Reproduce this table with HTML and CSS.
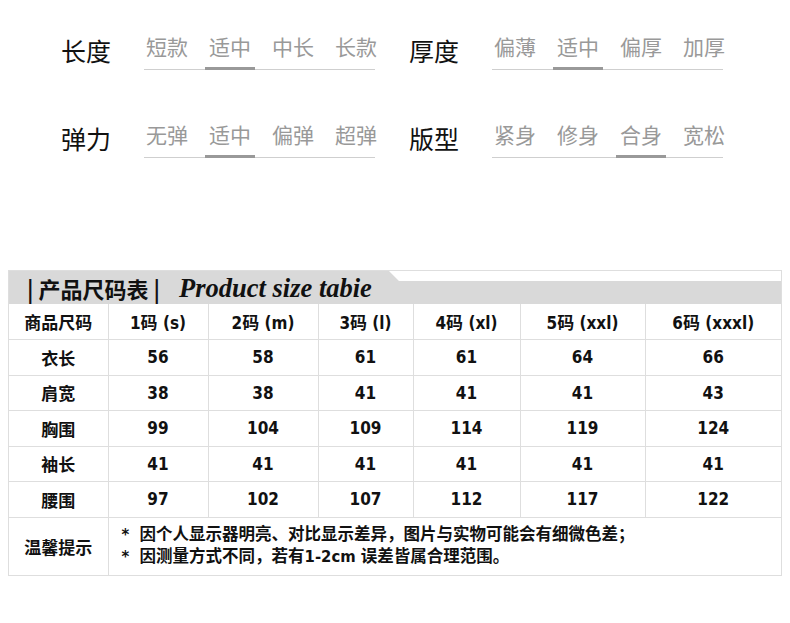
FILE: index.html
```html
<!DOCTYPE html>
<html lang="zh-CN">
<head>
<meta charset="utf-8">
<title>Product size</title>
<link rel="stylesheet" href="styles.css">
</head>
<body>
<div class="page">
  <section class="attrs">
    <div class="attr-row">
      <div class="attr">
        <span class="attr-label">长度</span>
        <div class="opts"><span class="opt">短款</span><span class="opt on">适中</span><span class="opt">中长</span><span class="opt">长款</span></div>
      </div>
      <div class="attr">
        <span class="attr-label">厚度</span>
        <div class="opts"><span class="opt">偏薄</span><span class="opt on">适中</span><span class="opt">偏厚</span><span class="opt">加厚</span></div>
      </div>
    </div>
    <div class="attr-row">
      <div class="attr">
        <span class="attr-label">弹力</span>
        <div class="opts"><span class="opt">无弹</span><span class="opt on">适中</span><span class="opt">偏弹</span><span class="opt">超弹</span></div>
      </div>
      <div class="attr">
        <span class="attr-label">版型</span>
        <div class="opts"><span class="opt">紧身</span><span class="opt">修身</span><span class="opt on">合身</span><span class="opt">宽松</span></div>
      </div>
    </div>
  </section>

  <section class="size-box">
    <div class="size-head">
      <span class="head-cn">| 产品尺码表 |</span>
      <span class="head-en">Product size tabie</span>
    </div>
    <table class="size-table">
      <colgroup>
        <col class="c1"><col class="c2"><col class="c3"><col class="c4"><col class="c5"><col class="c6"><col class="c7">
      </colgroup>
      <tr><td>商品尺码</td><td>1码 (s)</td><td>2码 (m)</td><td>3码 (l)</td><td>4码 (xl)</td><td>5码 (xxl)</td><td>6码 (xxxl)</td></tr>
      <tr><td>衣长</td><td>56</td><td>58</td><td>61</td><td>61</td><td>64</td><td>66</td></tr>
      <tr><td>肩宽</td><td>38</td><td>38</td><td>41</td><td>41</td><td>41</td><td>43</td></tr>
      <tr><td>胸围</td><td>99</td><td>104</td><td>109</td><td>114</td><td>119</td><td>124</td></tr>
      <tr><td>袖长</td><td>41</td><td>41</td><td>41</td><td>41</td><td>41</td><td>41</td></tr>
      <tr><td>腰围</td><td>97</td><td>102</td><td>107</td><td>112</td><td>117</td><td>122</td></tr>
      <tr class="note-row">
        <td>温馨提示</td>
        <td colspan="6" class="note">
          <p>*&nbsp; 因个人显示器明亮、对比显示差异，图片与实物可能会有细微色差；</p>
          <p>*&nbsp; 因测量方式不同，若有1-2cm 误差皆属合理范围。</p>
        </td>
      </tr>
    </table>
  </section>
</div>
</body>
</html>
```

FILE: styles.css
```css
* { box-sizing: border-box; }

html, body {
  margin: 0;
  padding: 0;
  background: #ffffff;
}

body {
  width: 790px;
  height: 623px;
  overflow: hidden;
  font-family: "Noto Sans CJK SC", "Noto Sans", sans-serif;
  color: #111;
}

.attrs {
  padding-top: 36px;
  padding-left: 60px;
  display: flex;
  flex-direction: column;
  gap: 54px;
}

.attr-row {
  display: flex;
  gap: 33px;
}

.attr {
  display: flex;
  align-items: flex-end;
}

.attr-label {
  width: 84px;
  font-size: 25px;
  line-height: 25px;
  margin-bottom: 7px;
  padding-left: 1px;
  color: #111;
  font-weight: 400;
}

.opts {
  width: 231px;
  display: flex;
  gap: 21px;
  padding-left: 2px;
  border-bottom: 1px solid #cfcfcf;
  white-space: nowrap;
}

.opt {
  position: relative;
  display: block;
  font-size: 21px;
  line-height: 21px;
  padding-bottom: 12px;
  color: #999;
}

.opt.on::after {
  content: "";
  position: absolute;
  left: 50%;
  bottom: -1px;
  width: 50px;
  height: 3px;
  margin-left: -25px;
  background: #999;
}

.size-box {
  margin: 112px 8px 0;
  border: 1px solid #dedede;
}

.size-head {
  height: 33px;
  background: #d9d9d9;
  clip-path: polygon(0 0, 380px 0, 390px 10px, 100% 10px, 100% 100%, 0 100%);
  display: flex;
  align-items: center;
  padding-left: 18px;
  padding-top: 1px;
}

.head-cn {
  font-family: "Noto Sans CJK SC", sans-serif;
  font-weight: 700;
  font-size: 22px;
  line-height: 1;
  color: #111;
}

.head-en {
  margin-left: 19px;
  font-family: "Liberation Serif", "Times New Roman", serif;
  font-style: italic;
  font-weight: 700;
  font-size: 26.5px;
  line-height: 1;
  color: #111;
}

.size-table {
  width: 772px;
  border-collapse: collapse;
  border-style: hidden;
  table-layout: fixed;
}

.c1 { width: 99px; }
.c2 { width: 100px; }
.c3 { width: 110px; }
.c4 { width: 95px; }
.c5 { width: 107px; }
.c6 { width: 125px; }
.c7 { width: 136px; }

.size-table td {
  border: 1px solid #dedede;
  height: 35.5px;
  padding: 0;
  text-align: center;
  vertical-align: middle;
  font-family: "DejaVu Sans Condensed", "DejaVu Sans", "Noto Sans CJK SC", sans-serif;
  font-stretch: condensed;
  font-weight: 700;
  font-size: 17px;
  color: #111;
}

.size-table .note-row td {
  height: 58px;
}

.size-table td.note {
  text-align: left;
  padding-left: 13px;
}

.note p {
  margin: 0;
  line-height: 22px;
  font-size: 16.5px;
}
```
